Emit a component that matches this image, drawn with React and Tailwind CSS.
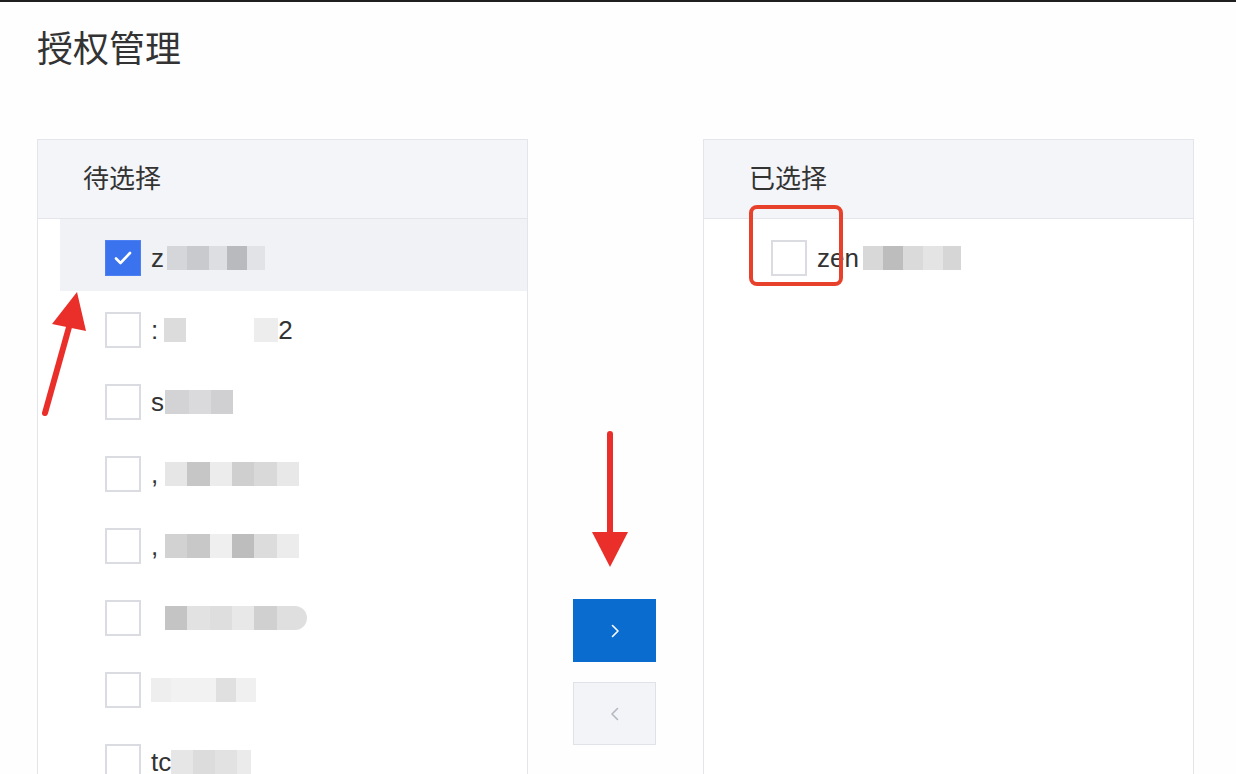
import React from "react";

const latin = { fontFamily: '"Liberation Sans", "Noto Sans CJK SC", sans-serif' };
const cjk = { fontFamily: '"Noto Sans CJK SC", "Noto Sans", sans-serif' };

// pending users; names are pixelated in the source, so blocks stand in for hidden letters
const pending = [
  {
    checked: true,
    prefix: "z",
    segs: [[3, "transparent"], [20, "#d5d6d9"], [22, "#c9cacd"], [18, "#dddee1"], [20, "#b9babd"], [18, "#e2e3e6"]],
  },
  {
    prefix: ":",
    segs: [[6, "transparent"], [22, "#dcdcdc"], [68, "transparent"], [24, "#ededed"]],
    suffix: "2",
  },
  { prefix: "s", segs: [[1, "transparent"], [24, "#d3d3d5"], [22, "#dadadc"], [22, "#d0d0d2"]] },
  {
    prefix: ",",
    segs: [[7, "transparent"], [22, "#e6e6e6"], [23, "#c6c6c6"], [22, "#ececec"], [22, "#cfcfcf"], [23, "#d9d9d9"], [22, "#e8e8e8"]],
  },
  {
    prefix: ",",
    segs: [[7, "transparent"], [22, "#d2d2d2"], [23, "#c8c8c8"], [22, "#efefef"], [22, "#bdbdbd"], [23, "#dcdcdc"], [22, "#ececec"]],
  },
  {
    prefix: "",
    segs: [[14, "transparent"], [22, "#c4c4c4"], [23, "#e2e2e2"], [22, "#dedede"], [22, "#e8e8e8"], [23, "#d0d0d0"], [30, "#dfdfdf"]],
    round: true,
  },
  { prefix: "", segs: [[20, "#eeeeee"], [45, "#f2f2f2"], [20, "#e0e0e0"], [20, "#f0f0f0"]] },
  { prefix: "tc", segs: [[0, "transparent"], [22, "#e6e6e6"], [22, "#dcdcdc"], [22, "#e2e2e2"], [14, "#ebebeb"]] },
];

const chosen = [
  {
    prefix: "zen",
    segs: [[4, "transparent"], [20, "#d8d8d8"], [20, "#bdbdbd"], [20, "#dadada"], [20, "#e4e4e4"], [18, "#d6d6d6"]],
  },
];

const Checkbox = ({ checked }) =>
  checked ? (
    <div className="w-[36px] h-[36px] bg-[#3b73ef] border border-[#4d80f2] flex items-center justify-center shrink-0">
      <svg width="18" height="14" viewBox="0 0 18 14" fill="none">
        <path d="M2 7.5l4.5 4.5L16 2" stroke="#fff" strokeWidth="2.6" strokeLinecap="round" strokeLinejoin="round" />
      </svg>
    </div>
  ) : (
    <div className="w-[36px] h-[36px] bg-white border-2 border-[#dadce1] shrink-0" />
  );

const Name = ({ item }) => (
  <div className="flex items-center text-[26px] text-[#333] ml-[10px]" style={latin}>
    {item.prefix && <span>{item.prefix}</span>}
    <div className={"flex h-[24px] blur-[0.6px] overflow-hidden" + (item.round ? " rounded-r-full" : "")}>
      {item.segs.map(([w, c], i) => (
        <div key={i} className="h-full" style={{ width: w, background: c }} />
      ))}
    </div>
    {item.suffix && <span>{item.suffix}</span>}
  </div>
);

const Row = ({ item }) => (
  <div className={"ml-[22px] h-[72px] pt-[6px] pl-[45px] flex items-center " + (item.checked ? "bg-[#f1f2f5]" : "")}>
    <Checkbox checked={item.checked} />
    <Name item={item} />
  </div>
);

const Panel = ({ title, items }) => (
  <div className="w-[491px] h-[700px] border border-[#e3e5ea] bg-white shrink-0">
    <div className="h-[79px] bg-[#f4f5f8] border-b border-[#e3e5ea] flex items-center pl-[45px] pb-[4px]">
      <span className="text-[26px] leading-[30px] text-[#333]" style={cjk}>
        {title}
      </span>
    </div>
    <div>
      {items.map((item, i) => (
        <Row key={i} item={item} />
      ))}
    </div>
  </div>
);

export default function App() {
  return (
    <div className="relative w-[1236px] h-[774px] overflow-hidden bg-[#fefefe] border-t-2 border-[#1f1f1f]">
      <h1 className="pl-[37px] pt-[24px] text-[36px] leading-[40px] text-[#333] font-normal" style={cjk}>
        授权管理
      </h1>

      <div className="flex pl-[37px] mt-[73px]">
        <Panel title="待选择" items={pending} />

        <div className="w-[175px] shrink-0 flex flex-col items-start pl-[45px] pt-[460px] gap-[20px]">
          <button className="w-[83px] h-[63px] bg-[#0b6ccf] flex items-center justify-center">
            <svg width="10" height="16" viewBox="0 0 10 16" fill="none">
              <path d="M2.5 2.5L8 8l-5.5 5.5" stroke="#fff" strokeWidth="1.6" strokeLinecap="round" strokeLinejoin="round" />
            </svg>
          </button>
          <button className="w-[83px] h-[63px] bg-[#f3f4f7] border border-[#e0e2e7] flex items-center justify-center">
            <svg width="10" height="16" viewBox="0 0 10 16" fill="none">
              <path d="M7.5 2.5L2 8l5.5 5.5" stroke="#b4b8c0" strokeWidth="1.6" strokeLinecap="round" strokeLinejoin="round" />
            </svg>
          </button>
        </div>

        <Panel title="已选择" items={chosen} />
      </div>

      {/* red annotations drawn over the page */}
      <div className="absolute left-[749px] top-[203px] w-[94px] h-[81px] border-[4px] border-[#e8412b] rounded-[8px] pointer-events-none" />
      <svg className="absolute left-0 top-0 pointer-events-none" width="1236" height="774">
        <line x1="45" y1="411" x2="71" y2="318" stroke="#ea2f2a" strokeWidth="6" strokeLinecap="round" />
        <polygon points="77,290 52,322 86,329" fill="#ea2f2a" />
        <line x1="610" y1="432" x2="610" y2="536" stroke="#ea2f2a" strokeWidth="6" strokeLinecap="round" />
        <polygon points="592,530 628,530 610,565" fill="#ea2f2a" />
      </svg>
    </div>
  );
}
